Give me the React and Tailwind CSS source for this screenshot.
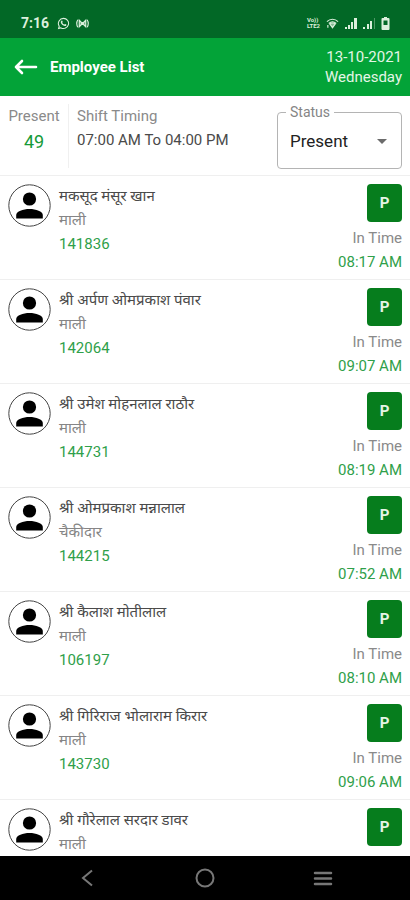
import { useState } from 'react';

const employees = [
  { id: '141836', name: 'मकसूद मंसूर खान', role: 'माली', inTime: '08:17 AM' },
  { id: '142064', name: 'श्री अर्पण ओमप्रकाश पंवार', role: 'माली', inTime: '09:07 AM' },
  { id: '144731', name: 'श्री उमेश मोहनलाल राठौर', role: 'माली', inTime: '08:19 AM' },
  { id: '144215', name: 'श्री ओमप्रकाश मन्नालाल', role: 'चैकीदार', inTime: '07:52 AM' },
  { id: '106197', name: 'श्री कैलाश मोतीलाल', role: 'माली', inTime: '08:10 AM' },
  { id: '143730', name: 'श्री गिरिराज भोलाराम किरार', role: 'माली', inTime: '09:06 AM' },
  { id: '', name: 'श्री गौरेलाल सरदार डावर', role: 'माली', inTime: '' },
];

function StatusBar() {
  return (
    <div className="flex h-[38px] shrink-0 items-center bg-[#026826] pt-2 pr-5 pl-[21px] text-[#dcefdc]">
      <span className="text-sm font-bold">7:16</span>
      {/* WhatsApp */}
      <svg className="ml-2 h-[13px] w-[13px]" viewBox="0 0 24 24" fill="currentColor">
        <path d="M12 1.5A10.4 10.4 0 0 0 3.1 17.3L1.5 22.5l5.4-1.5A10.4 10.4 0 1 0 12 1.5zm0 2a8.4 8.4 0 1 1-4.8 15.3l-2.8.8.8-2.7A8.4 8.4 0 0 1 12 3.5z" />
        <path d="M8.3 6.8c.6-.5 1.2-.3 1.4.2l.8 1.9c.1.4-.2.9-.8 1.5.9 1.7 2.2 2.9 3.9 3.6.7-.9 1.1-1.2 1.5-1l1.9.9c.5.3.5.6.3 1.2-.4 1.3-1.8 1.9-3 1.7-3.5-.6-7-3.9-7.4-7.1-.1-1.2.5-2.2 1.4-2.9z" />
      </svg>
      {/* Cast waves */}
      <svg className="ml-1.5 h-[11px] w-[13px]" viewBox="0 0 28 22" fill="none" stroke="currentColor" strokeWidth="2.5">
        <path d="M4 3c-3 5-3 11 0 16M24 3c3 5 3 11 0 16" />
        <path d="M7 4v14l7-7zM21 4v14l-7-7z" fill="currentColor" fillOpacity="0.5" />
        <circle cx="14" cy="11" r="2" fill="currentColor" />
      </svg>

      <div className="ml-auto flex items-center">
        <div className="flex flex-col text-[6px] leading-[6px] font-bold">
          <span>Vo))</span>
          <span>LTE2</span>
        </div>
        <svg className="ml-1.5 h-[11px] w-[13px]" viewBox="0 0 28 22" fill="none" stroke="currentColor" strokeWidth="2.5">
          <path d="M2 7c7-7 17-7 24 0M6 11c5-4.5 11-4.5 16 0" />
          <path d="M8 12l6 8 6-8c-3.5-2.5-8.5-2.5-12 0z" fill="currentColor" fillOpacity="0.6" />
          <path d="M4 14v6" />
        </svg>
        <svg className="ml-1.5 h-[11px] w-3" viewBox="0 0 12 11" fill="currentColor">
          <path d="M0 9h2v2H0zM3 7h2v4H3zM6 4h2v7H6zM9 0h3v11H9z" />
        </svg>
        <svg className="ml-1.5 h-[11px] w-3" viewBox="0 0 12 11" fill="currentColor">
          <path d="M0 9h2v2H0zM4 6h2v5H4zM7 3h2v8H7z" />
          <path d="M11 0h1v11h-1z" opacity="0.35" />
        </svg>
        <svg className="ml-1.5 h-[13px] w-[9px]" viewBox="0 0 9 13" fill="currentColor">
          <path fillRule="evenodd" d="M3 0h3v1h1.5q1 0 1 1v10q0 1-1 1h-6q-1 0-1-1V2q0-1 1-1H3zM2.5 3.5V8h4V3.5z" />
        </svg>
      </div>
    </div>
  );
}

function Header() {
  return (
    <header className="flex h-[58px] shrink-0 items-center bg-[#03a338] pr-2 pl-3.5 text-white">
      <button type="button" aria-label="Back">
        <svg className="h-4 w-6" viewBox="0 0 24 16" fill="none" stroke="currentColor" strokeWidth="2.6" strokeLinecap="round" strokeLinejoin="round">
          <path d="M22 8H2M8 2L2 8l6 6" />
        </svg>
      </button>
      <h1 className="ml-3 text-[15px] font-bold">Employee List</h1>
      <div className="ml-auto text-right text-[15px] leading-5 text-[#e3f6e6]">
        <p>13-10-2021</p>
        <p>Wednesday</p>
      </div>
    </header>
  );
}

function Summary() {
  const [status, setStatus] = useState('Present');

  return (
    <section className="flex shrink-0 items-start border-b border-[#efefef] pr-2 pb-1.5">
      <div className="mt-2 w-[69px] border-r border-[#f0f0f0] pb-2 text-center">
        <p className="text-[15px] leading-6 text-[#8a8a8a]">Present</p>
        <p className="pb-1 text-lg leading-7 text-[#169a38]">49</p>
      </div>
      <div className="mt-2 pl-2 text-[15px] leading-6">
        <p className="text-[#8a8a8a]">Shift Timing</p>
        <p className="text-[#4a4a4a]">07:00 AM To 04:00 PM</p>
      </div>
      <fieldset className="relative mt-2 ml-auto w-[125px] rounded border border-[#b4b4b4] px-2">
        <legend className="px-1 text-sm leading-4 text-[#858585]">
          <label htmlFor="status">Status</label>
        </legend>
        <select
          id="status"
          value={status}
          onChange={(e) => setStatus(e.target.value)}
          className="mb-1 block h-11 w-full appearance-none bg-transparent pl-1 text-[17px] text-[#222]"
        >
          <option>Present</option>
          <option>Absent</option>
        </select>
        <svg className="pointer-events-none absolute right-3.5 bottom-6 h-[5px] w-2.5" viewBox="0 0 10 5" fill="#6b6b6b">
          <path d="M0 0h10L5 5z" />
        </svg>
      </fieldset>
    </section>
  );
}

function EmployeeRow({ employee }) {
  return (
    <li className="flex items-start border-b border-[#efefef] px-2 pt-2 pb-[5px] text-[15px] leading-6">
      <svg className="h-[43px] w-[43px] shrink-0" viewBox="0 0 43 43">
        <circle cx="21.5" cy="21.5" r="20.7" fill="#fff" stroke="#444" strokeWidth="1" />
        <circle cx="21.5" cy="15" r="6.6" />
        <path d="M8.2 34.5V31C8.2 27.5 15 25 21.5 25S34.8 27.5 34.8 31V34.5z" />
      </svg>
      <div className="ml-2 min-w-0 flex-1">
        <p className="text-[#4a4a4a]">{employee.name}</p>
        <p className="text-[#858585]">{employee.role}</p>
        {employee.id && <p className="text-[#2fa04a]">{employee.id}</p>}
      </div>
      <div className="flex flex-col items-end">
        <span className="mb-1 flex h-[38px] w-[35px] items-center justify-center rounded bg-[#067d1d] text-[15px] font-bold text-[#e6f5e6]">
          P
        </span>
        {employee.inTime && (
          <>
            <span className="text-[#8a8a8a]">In Time</span>
            <span className="text-[#2fa04a]">{employee.inTime}</span>
          </>
        )}
      </div>
    </li>
  );
}

function NavBar() {
  return (
    <nav className="flex h-11 shrink-0 items-center justify-around bg-black px-7 text-[#777]">
      <button type="button" aria-label="Back">
        <svg className="h-5 w-5" viewBox="0 0 20 20" fill="none" stroke="currentColor" strokeWidth="2">
          <path d="M15 2.5L6 10l9 7.5" />
        </svg>
      </button>
      <button type="button" aria-label="Home">
        <svg className="h-5 w-5" viewBox="0 0 20 20" fill="none" stroke="currentColor" strokeWidth="2">
          <circle cx="10" cy="10" r="8.5" />
        </svg>
      </button>
      <button type="button" aria-label="Recent apps">
        <svg className="h-5 w-5" viewBox="0 0 20 20" fill="none" stroke="currentColor" strokeWidth="2.5" strokeLinecap="round">
          <path d="M2 5h16M2 10.5h16M2 16h16" />
        </svg>
      </button>
    </nav>
  );
}

export default function App() {
  return (
    <div className="flex h-screen flex-col bg-white font-[Roboto,'Noto_Sans_Devanagari','Noto_Sans',sans-serif]">
      <StatusBar />
      <Header />
      <Summary />
      <ul className="min-h-0 flex-1 overflow-hidden">
        {employees.map((employee) => (
          <EmployeeRow key={employee.name} employee={employee} />
        ))}
      </ul>
      <NavBar />
    </div>
  );
}
